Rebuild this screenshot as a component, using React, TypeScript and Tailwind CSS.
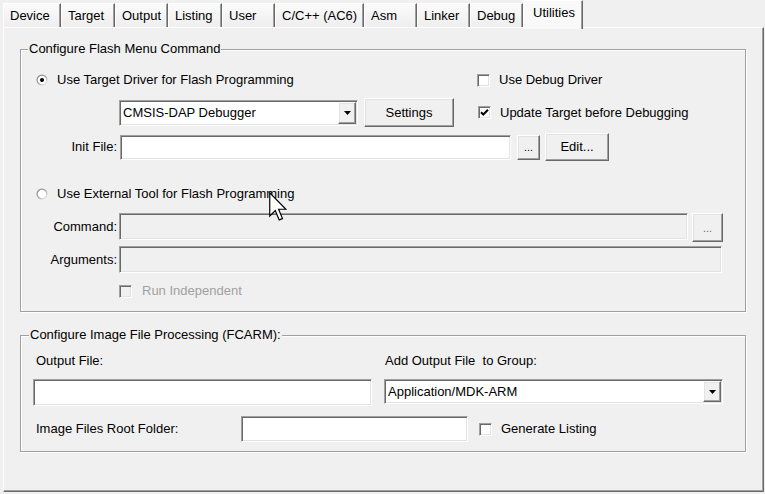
const sunken =
  "border border-t-[#a0a0a0] border-l-[#a0a0a0] border-r-white border-b-white shadow-[inset_1px_1px_0_#696969,inset_-1px_-1px_0_#e3e3e3]";
const raised =
  "border border-t-white border-l-white border-r-[#696969] border-b-[#696969] shadow-[inset_-1px_-1px_0_#a0a0a0,inset_1px_1px_0_#e3e3e3] bg-[#f0f0f0]";

const tabs = [
  { label: "Device", w: "w-[58px]" },
  { label: "Target", w: "w-[54px]" },
  { label: "Output", w: "w-[53px]" },
  { label: "Listing", w: "w-[54px]" },
  { label: "User", w: "w-[53px]" },
  { label: "C/C++ (AC6)", w: "w-[89px]" },
  { label: "Asm", w: "w-[53px]" },
  { label: "Linker", w: "w-[53px]" },
  { label: "Debug", w: "w-[53px]" },
];

function Radio({ checked }: { checked?: boolean }) {
  return (
    <svg width="12" height="12" viewBox="0 0 12 12" className="shrink-0">
      <defs>
        <linearGradient id="rg" x1="0" y1="0" x2="1" y2="1">
          <stop offset="0" stopColor="#808080" />
          <stop offset="0.5" stopColor="#a0a0a0" />
          <stop offset="1" stopColor="#ffffff" />
        </linearGradient>
      </defs>
      <circle cx="6" cy="6" r="5.5" fill="url(#rg)" />
      <circle cx="6" cy="6" r="4.3" fill="#fff" />
      {checked && <circle cx="6" cy="6" r="2" fill="#000" />}
    </svg>
  );
}

function Check({ checked, disabled }: { checked?: boolean; disabled?: boolean }) {
  return (
    <div
      className={`w-[13px] h-[13px] shrink-0 flex items-center justify-center ${sunken} ${
        disabled ? "bg-[#f0f0f0]" : "bg-white"
      }`}
    >
      {checked && (
        <svg width="9" height="9" viewBox="0 0 9 9">
          <path d="M1 4.2 L3.3 6.5 L8 1.8" stroke="#000" strokeWidth="2" fill="none" />
        </svg>
      )}
    </div>
  );
}

function Btn({ className, children }: { className: string; children: React.ReactNode }) {
  return <div className={`${raised} ${className} shrink-0 flex items-center justify-center`}>{children}</div>;
}

function Combo({ className, value }: { className: string; value: string }) {
  return (
    <div className={`${sunken} bg-white p-[1px] flex shrink-0 ${className}`}>
      <div className="flex-1 flex items-center pl-[2px] leading-[16px]">{value}</div>
      <div className={`${raised} w-[18px] flex items-center justify-center`}>
        <svg width="7" height="4" viewBox="0 0 7 4">
          <path d="M0 0h7L3.5 4z" fill="#000" />
        </svg>
      </div>
    </div>
  );
}

function Cursor() {
  return (
    <svg width="18" height="30" viewBox="0 0 12 20" className="absolute left-[269px] top-[192px]">
      <path
        d="M0.5 0.5 L0.5 16 L4.2 12.4 L6.8 18.6 L9 17.7 L6.4 11.5 L11.3 11.5 Z"
        fill="#fff"
        stroke="#000"
        strokeWidth="0.8"
        strokeLinejoin="miter"
      />
    </svg>
  );
}

export default function App() {
  return (
    <div className="relative w-[765px] h-[494px] overflow-hidden bg-[#f0f0f0] text-[13px] leading-[16px] text-black font-['Liberation_Sans',Arial,sans-serif]">
      {/* tabs */}
      <div className="flex items-end h-[27px] pl-[3px]">
        {tabs.map((t) => (
          <div
            key={t.label}
            className={`${t.w} h-[24px] shrink-0 flex items-center pl-[6px] border-t border-l border-r border-t-white border-l-white border-r-[#696969] shadow-[inset_-1px_0_0_#a0a0a0] bg-linear-to-b from-[#fbfbfb] to-[#eeeeee]`}
          >
            {t.label}
          </div>
        ))}
        <div className="relative z-10 w-[60px] h-[29px] -mb-[2px] shrink-0 pl-[9px] pt-[4px] border-t border-l border-r border-t-white border-l-white border-r-[#696969] shadow-[inset_-1px_0_0_#a0a0a0] bg-[#f9f9f9]">
          Utilities
        </div>
      </div>

      {/* panel */}
      <div className="ml-[3px] w-[761px] h-[465px] border border-t-white border-l-white border-r-[#696969] border-b-[#696969] shadow-[inset_-1px_-1px_0_#a0a0a0] bg-[#f0f0f0]">
        <fieldset className="ml-[16px] mt-[13px] w-[726px] pb-[12px] border border-[#a0a0a0] shadow-[inset_1px_1px_0_#fff,1px_1px_0_#fff]">
          <legend className="ml-[7px] px-[1px] bg-[#f0f0f0] leading-[16px]">Configure Flash Menu Command</legend>

          <div className="flex items-center h-[16px] mt-[15px] ml-[15px]">
            <div className="w-[441px] flex items-center gap-[9px]">
              <Radio checked />
              <span>Use Target Driver for Flash Programming</span>
            </div>
            <Check />
            <span className="ml-[9px]">Use Debug Driver</span>
          </div>

          <div className="flex items-center h-[29px] mt-[10px] ml-[98px]">
            <Combo className="w-[239px] h-[26px]" value="CMSIS-DAP Debugger" />
            <Btn className="ml-[6px] w-[90px] h-[29px]">Settings</Btn>
            <div className="ml-[24px]">
              <Check checked />
            </div>
            <span className="ml-[9px]">Update Target before Debugging</span>
          </div>

          <div className="flex items-center h-[28px] mt-[6px]">
            <span className="w-[96px] text-right shrink-0">Init File:</span>
            <div className={`${sunken} bg-white ml-[3px] w-[391px] h-[25px]`} />
            <Btn className="ml-[6px] w-[23px] h-[25px] text-[11px]">...</Btn>
            <Btn className="ml-[5px] w-[64px] h-[28px]">Edit...</Btn>
          </div>

          <div className="flex items-center gap-[9px] h-[16px] mt-[25px] ml-[15px]">
            <Radio />
            <span>Use External Tool for Flash Programming</span>
          </div>

          <div className="flex items-start h-[29px] mt-[11px]">
            <span className="w-[96px] h-[27px] flex items-center justify-end shrink-0">Command:</span>
            <div className={`${sunken} ml-[2px] w-[569px] h-[27px]`} />
            <Btn className="ml-[4px] w-[31px] h-[29px] text-[11px] text-[#6d6d6d]">...</Btn>
          </div>

          <div className="flex items-center h-[27px] mt-[4px]">
            <span className="w-[96px] text-right shrink-0">Arguments:</span>
            <div className={`${sunken} ml-[2px] w-[603px] h-[27px]`} />
          </div>

          <div className="flex items-center h-[16px] mt-[10px] ml-[98px]">
            <Check disabled />
            <span className="ml-[10px] text-[#a0a0a0]">Run Independent</span>
          </div>
        </fieldset>

        <fieldset className="ml-[16px] mt-[15px] w-[726px] pb-[9px] border border-[#a0a0a0] shadow-[inset_1px_1px_0_#fff,1px_1px_0_#fff]">
          <legend className="ml-[8px] px-[1px] bg-[#f0f0f0] leading-[16px]">Configure Image File Processing (FCARM):</legend>

          <div className="flex items-center h-[16px] mt-[10px] ml-[15px]">
            <span className="w-[349px] shrink-0">Output File:</span>
            <span className="whitespace-pre">Add Output File  to Group:</span>
          </div>

          <div className="flex items-start h-[27px] mt-[10px] ml-[12px]">
            <div className={`${sunken} bg-white w-[339px] h-[27px]`} />
            <Combo className="ml-[12px] w-[339px] h-[25px]" value="Application/MDK-ARM" />
          </div>

          <div className="flex items-center h-[26px] mt-[10px] ml-[15px]">
            <span className="w-[205px] shrink-0">Image Files Root Folder:</span>
            <div className={`${sunken} bg-white w-[227px] h-[26px]`} />
            <div className="ml-[11px]">
              <Check />
            </div>
            <span className="ml-[9px]">Generate Listing</span>
          </div>
        </fieldset>
      </div>

      <Cursor />
    </div>
  );
}
